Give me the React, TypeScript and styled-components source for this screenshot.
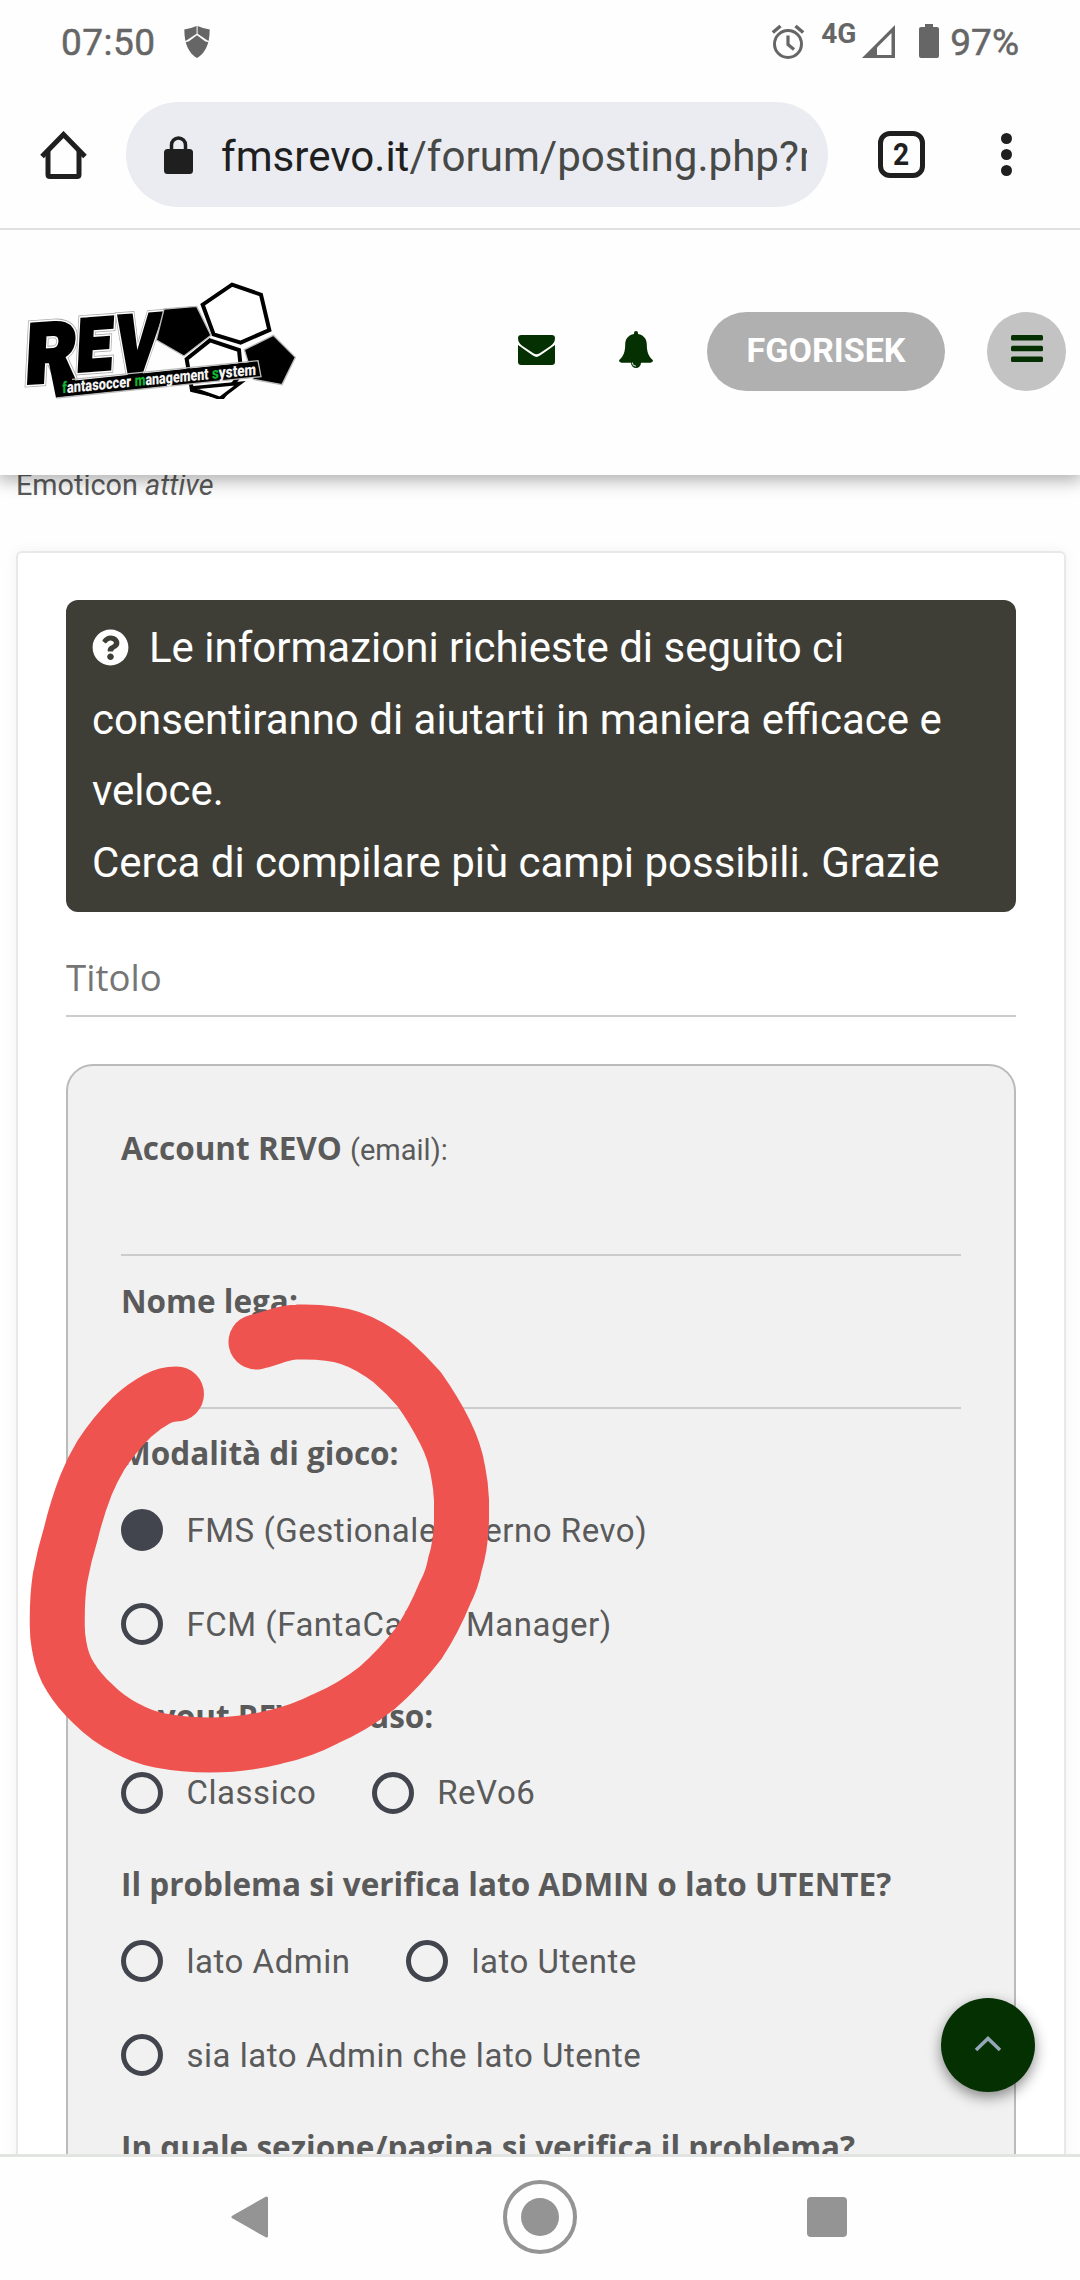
import React from "react";
import styled, { createGlobalStyle } from "styled-components";
import { FaQuestionCircle } from "react-icons/fa";

const GlobalStyle = createGlobalStyle`
  *, *::before, *::after { box-sizing: border-box; }
  body { margin: 0; background: #fff; }
`;

const roboto = `Roboto, "Noto Sans", sans-serif`;
const openSans = `"Open Sans", "Noto Sans", sans-serif`;
const green = "#053002";

const Screen = styled.div`
  position: relative;
  display: flex;
  flex-direction: column;
  width: 1080px;
  height: 2280px;
  overflow: hidden;
  background: #fefefe;
  color: #5a5a5a;
  font-family: ${roboto};
`;

/* ---------- Android status bar ---------- */
const StatusBar = styled.div`
  display: flex;
  align-items: center;
  justify-content: space-between;
  height: 84px;
  padding: 0 61px 0 61px;
  color: #666;
  font-size: 37px;
`;
const StatusGroup = styled.div`
  display: flex;
  align-items: center;
`;
const Clock = styled.span`
  margin-right: 28px;
  letter-spacing: 0.5px;
  -webkit-text-stroke: 0.5px #666;
`;
const Network = styled.span`
  margin: -17px 6px 0 16px;
  font-size: 28px;
  font-weight: 700;
`;
const Percent = styled.span`
  margin-left: 11px;
  -webkit-text-stroke: 0.5px #666;
`;
const BatteryIcon = styled.svg`
  margin: -3px 0 0 24px;
`;

/* ---------- Browser toolbar ---------- */
const Toolbar = styled.div`
  position: relative;
  z-index: 2;
  display: flex;
  align-items: center;
  height: 146px;
  padding: 0 67px 3px 40px;
  border-bottom: 2px solid #e0e0e0;
  background: #fefefe;
`;
const AddressBar = styled.div`
  display: flex;
  align-items: center;
  width: 702px;
  height: 105px;
  margin-left: 39px;
  padding: 0 21px 0 38px;
  border-radius: 53px;
  background: #ebecf1;
`;
const Url = styled.div`
  flex: 1;
  margin: 4px 0 0 28px;
  overflow: hidden;
  white-space: nowrap;
  font-size: 42.1px;
  line-height: 60px;
  color: #474947;
  b { font-weight: 400; color: #1f1f1f; }
`;
const TabCount = styled.div`
  display: flex;
  align-items: center;
  justify-content: center;
  width: 47px;
  height: 47px;
  margin-left: 50px;
  border: 5px solid #1f1f1f;
  border-radius: 12px;
  color: #1f1f1f;
  font-size: 32px;
  font-weight: 700;
  line-height: 37px;
  span { transform: scaleX(0.88); }
`;
const Kebab = styled.div`
  display: flex;
  flex-direction: column;
  gap: 5px;
  margin-left: 76px;
  i { width: 11px; height: 11px; border-radius: 50%; background: #1f1f1f; }
`;

/* ---------- Site header ---------- */
const SiteHeader = styled.header`
  position: relative;
  z-index: 1;
  display: flex;
  align-items: center;
  flex: none;
  height: 245px;
  padding: 0 14px 2px 24px;
  background: #fefefe;
  box-shadow: 0 4px 16px 2px rgba(0, 0, 0, 0.3);
`;
const LogoSvg = styled.svg`
  align-self: flex-start;
  margin-top: 50px;
`;
const HeaderActions = styled.div`
  display: flex;
  align-items: center;
  margin-left: auto;
  color: ${green};
`;
const EnvelopeIcon = styled.svg`
  margin-top: -3px;
`;
const BellIcon = styled.svg`
  margin: -5px 0 0 64px;
`;
const UserButton = styled.button`
  width: 238px;
  height: 79px;
  margin: 0 42px 0 54px;
  padding: 0 0 3px;
  border: 0;
  border-radius: 40px;
  background: #b0b0b0;
  color: #fff;
  font: 700 34.1px ${roboto};
`;
const MenuButton = styled.button`
  display: flex;
  align-items: center;
  justify-content: center;
  width: 79px;
  height: 79px;
  padding: 0 0 6px;
  border: 0;
  border-radius: 50%;
  background: #c3c3c3;
`;

/* ---------- Page body ---------- */
const Main = styled.main`
  flex: none;
  height: 1679px;
  overflow: hidden;
`;
const EmoticonLine = styled.p`
  margin: -10px 0 46px 16px;
  font-size: 28.8px;
  line-height: 40px;
`;
const Card = styled.section`
  height: 1700px;
  margin: 0 14px 0 16px;
  padding: 47px 48px 0;
  border: 2px solid #e8e8e8;
  border-radius: 6px;
  background: #fff;
  box-shadow: 0 0 14px rgba(0, 0, 0, 0.05);
`;
const Notice = styled.div`
  height: 312px;
  padding: 12px 26px;
  border-radius: 12px;
  background: #3e3e36;
  color: #fff;
  font-size: 42px;
  line-height: 71.5px;
  white-space: nowrap;
  svg { width: 37px; height: 37px; margin-right: 20px; vertical-align: -4px; }
`;
const TitleField = styled.div`
  margin: 40px 0 47px;
  padding-bottom: 13px;
  border-bottom: 2px solid #ccc;
  color: #757575;
  font: 36.6px/50px ${openSans};
`;
const Questions = styled.div`
  height: 1200px;
  padding: 54px 53px 0;
  border: 2px solid #bbb;
  border-radius: 27px;
  background: #f1f1f1;
`;
const Group = styled.div`
  & + & { margin-top: 16.6px; }
`;
const Label = styled.div`
  color: #5a5a5a;
  font: 700 31.5px/55.5px ${openSans};
  white-space: nowrap;
`;
const Hint = styled.span`
  font: 400 29px/1 ${roboto};
`;
const TextLine = styled.div`
  height: 80.5px;
  border-bottom: 2px solid #ccc;
`;
const Options = styled.div`
  padding-top: 2.5px;
`;
const OptionRow = styled.div`
  display: flex;
  gap: 55.3px;
  height: 94px;
`;
const Option = styled.label`
  display: flex;
  align-items: center;
  gap: 23.5px;
  font-size: 33px;
  letter-spacing: 0.53px;
  white-space: nowrap;
`;
const RadioMark = styled.span<{ $on?: boolean }>`
  width: 42px;
  height: 42px;
  border: 5px solid #42454d;
  border-radius: 50%;
  background: ${(p) => (p.$on ? "#42454d" : "transparent")};
`;

/* ---------- Overlays ---------- */
const Scribble = styled.svg`
  position: absolute;
  left: 0;
  top: 1280px;
  z-index: 2;
`;
const ToTop = styled.button`
  position: absolute;
  left: 941px;
  top: 1998px;
  z-index: 2;
  display: flex;
  align-items: center;
  justify-content: center;
  width: 94px;
  height: 94px;
  padding: 0;
  border: 0;
  border-radius: 50%;
  background: ${green};
  box-shadow: 0 5px 14px rgba(0, 0, 0, 0.45);
`;

/* ---------- Android navigation ---------- */
const NavBar = styled.nav`
  position: relative;
  flex: 1;
  display: flex;
  align-items: center;
  justify-content: space-between;
  padding: 0 233px 3px 231px;
  border-top: 3px solid #e2e4e1;
  background: #fefefe;
`;
const HomeRing = styled.span`
  display: flex;
  align-items: center;
  justify-content: center;
  width: 74px;
  height: 74px;
  margin-left: 4px;
  border: 4px solid #949494;
  border-radius: 50%;
  i { width: 38px; height: 38px; border-radius: 50%; background: #949494; }
`;
const RecentSquare = styled.span`
  width: 40px;
  height: 40px;
  border-radius: 4px;
  background: #949494;
`;

const Logo = () => {
  const letters = (
    <>
      <text transform="translate(74 370) rotate(-4) skewX(-7)" textLength="152" lengthAdjust="spacingAndGlyphs">R</text>
      <text transform="translate(228 333) rotate(-4) skewX(-7)" fontSize="215" textLength="104" lengthAdjust="spacingAndGlyphs">E</text>
      <text transform="translate(342 345) rotate(-4) skewX(-9)" textLength="128" lengthAdjust="spacingAndGlyphs">V</text>
    </>
  );
  return (
    <LogoSvg width="276" height="119" viewBox="72 60 828 357">
      <g fontFamily="Roboto, sans-serif" fontWeight="900" fontSize="245" strokeLinejoin="miter">
        <g fill="#aaa" stroke="#aaa" strokeWidth="26">{letters}</g>
        <g fill="#fff" stroke="#fff" strokeWidth="21">{letters}</g>
        <g fill="#000" stroke="#000" strokeWidth="12">{letters}</g>
      </g>
      <polygon points="492,147 590,139 633,226 552,288 469,240" fill="#000" stroke="#bbb" strokeWidth="4" />
      <polygon points="497,152 584,144 618,222 550,280 475,238" fill="#000" />
      <polygon points="630,241 717,270 724,340 668,412 576,390 560,297" fill="#fff" stroke="#000" strokeWidth="12" />
      <polygon points="696,74 783,104 808,210 722,248 641,223 608,134" fill="#fff" stroke="#000" strokeWidth="12" />
      <polygon points="820,226 886,292 846,374 760,358 733,269" fill="#000" stroke="#bbb" strokeWidth="4" />
      <polygon points="573,384 660,415 720,370" fill="#fff" stroke="#000" strokeWidth="10" />
      <polygon points="146,305 200,301 218,362 774,304 782,350 168,413" fill="#000" />
      <path d="M216 358L774 302L783 350L170 414" fill="none" stroke="#bbb" strokeWidth="4" />
      <g fontFamily="Roboto, sans-serif" fontWeight="900" fontSize="48" fill="#f4f4f4">
        <text transform="translate(187 400) rotate(-5.4) skewX(-5)" textLength="207" lengthAdjust="spacingAndGlyphs">
          <tspan fill="#12b52c">f</tspan>antasoccer
        </text>
        <text transform="translate(404 379) rotate(-5.4) skewX(-5)" textLength="223" lengthAdjust="spacingAndGlyphs">
          <tspan fill="#12b52c">m</tspan>anagement
        </text>
        <text transform="translate(636 357) rotate(-5.4) skewX(-5)" textLength="133" lengthAdjust="spacingAndGlyphs">
          <tspan fill="#12b52c">s</tspan>ystem
        </text>
      </g>
    </LogoSvg>
  );
};

const Radio = ({ text, on }: { text: string; on?: boolean }) => (
  <Option>
    <RadioMark $on={on} />
    {text}
  </Option>
);

export default function App() {
  return (
    <Screen>
      <GlobalStyle />
      <StatusBar>
        <StatusGroup>
          <Clock>07:50</Clock>
          <svg width="26" height="32" viewBox="0 0 26 32" fill="#666">
            <path d="M12.6 0v7.700L2 14.800H1.300Q.3 9 .3 3.400Q7 2.500 12.600 0zM13.600 0v7.700L24 14.800H24.700Q25.700 9 25.700 3.400Q19 2.500 13.600 0z" />
            <path d="M13 9.300l8 6l3.300.9C22 23.500 18.500 29 13 32C7.500 29 4 23.500 1.700 16.200l3.300-.9z" />
          </svg>
        </StatusGroup>
        <StatusGroup>
          <svg width="34" height="36" viewBox="0 0 34 36" fill="none" stroke="#666">
            <circle cx="17" cy="20" r="13.5" strokeWidth="3" />
            <path d="M17 11.500v9l6 5" strokeWidth="3.200" />
            <path d="M1.800 8.500l7.700-6.500M32.200 8.500l-7.700-6.500" strokeWidth="3.500" />
          </svg>
          <Network>4G</Network>
          <svg width="33" height="34" viewBox="0 0 33 34">
            <path d="M0 33L33 0V33z" fill="#666" />
            <path d="M15 22.500L29.500 8V30H15z" fill="#fefefe" />
          </svg>
          <BatteryIcon width="20" height="34" viewBox="0 0 20 34" fill="#666">
            <path d="M6 0h8v3h4a2 2 0 0 1 2 2v27a2 2 0 0 1-2 2H2a2 2 0 0 1-2-2V5a2 2 0 0 1 2-2h4z" />
          </BatteryIcon>
          <Percent>97%</Percent>
        </StatusGroup>
      </StatusBar>

      <Toolbar>
        <svg width="47" height="48" viewBox="0 0 47 48" fill="none" stroke="#1f1f1f" strokeWidth="5">
          <path d="M2 25.500L23.500 3.500L45 25.500" />
          <path d="M8 20V43.500q0 2 2 2H37q2 0 2-2V20" />
        </svg>
        <AddressBar>
          <svg width="29" height="38" viewBox="0 0 29 38">
            <path d="M7.500 15V9a7 7 0 0 1 14 0v6" fill="none" stroke="#1f1f1f" strokeWidth="3.500" />
            <rect y="13" width="29" height="25" rx="3.500" fill="#1f1f1f" />
          </svg>
          <Url>
            <b>fmsrevo.it</b>/forum/posting.php?m
          </Url>
        </AddressBar>
        <TabCount>
          <span>2</span>
        </TabCount>
        <Kebab>
          <i />
          <i />
          <i />
        </Kebab>
      </Toolbar>

      <SiteHeader>
        <Logo />
        <HeaderActions>
          <EnvelopeIcon width="37" height="30" viewBox="0 0 37 30" fill={green}>
            <path d="M3.300 0H33.700A3.300 3.300 0 0 1 37 3.300C37 7 35 9.300 32.500 11L22 18Q20 19.300 18.500 19.300Q17 19.300 15 18L4.500 11C2 9.300 0 7 0 3.300A3.300 3.300 0 0 1 3.300 0z" />
            <path d="M0 9.800Q1 11 15 20.600Q17 22 18.500 22Q20 22 22 20.600Q36 11 37 9.800V26.700A3.300 3.300 0 0 1 33.700 30H3.300A3.300 3.300 0 0 1 0 26.700z" />
          </EnvelopeIcon>
          <BellIcon width="34" height="37" viewBox="0 0 34 37">
            <path
              d="M15 2a2 2 0 0 1 4 0v1C25 4.200 27.800 8 27.800 13.500C27.800 21 29.500 25.500 34 29.300Q34 31.700 31.500 31.700H22a5 5.200 0 0 1-10 0H2.500Q0 31.700 0 29.300C4.500 25.500 6.200 21 6.200 13.500C6.200 8 9 4.200 15 3z"
              fill={green}
            />
            <path d="M13.300 31.500a3.700 3.700 0 0 0 3.700 3.700" fill="none" stroke="#fefefe" strokeWidth="0.9" />
          </BellIcon>
          <UserButton>FGORISEK</UserButton>
          <MenuButton>
            <svg width="32" height="27" viewBox="0 0 32 27" fill={green}>
              <rect width="32" height="5.600" rx="1.500" />
              <rect y="10.700" width="32" height="5.600" rx="1.500" />
              <rect y="21.400" width="32" height="5.600" rx="1.500" />
            </svg>
          </MenuButton>
        </HeaderActions>
      </SiteHeader>

      <Main>
        <EmoticonLine>
          Emoticon <em>attive</em>
        </EmoticonLine>
        <Card>
          <Notice>
            <FaQuestionCircle />
            Le informazioni richieste di seguito ci
            <br />
            consentiranno di aiutarti in maniera efficace e
            <br />
            veloce.
            <br />
            Cerca di compilare più campi possibili. Grazie
          </Notice>
          <TitleField>Titolo</TitleField>
          <Questions>
            <Group>
              <Label>
                Account REVO <Hint>(email):</Hint>
              </Label>
              <TextLine />
            </Group>
            <Group>
              <Label>Nome lega:</Label>
              <TextLine />
            </Group>
            <Group>
              <Label>Modalità di gioco:</Label>
              <Options>
                <OptionRow>
                  <Radio text="FMS (Gestionale interno Revo)" on />
                </OptionRow>
                <OptionRow>
                  <Radio text="FCM (FantaCalcio Manager)" />
                </OptionRow>
              </Options>
            </Group>
            <Group>
              <Label>Layout REVO in uso:</Label>
              <Options>
                <OptionRow>
                  <Radio text="Classico" />
                  <Radio text="ReVo6" />
                </OptionRow>
              </Options>
            </Group>
            <Group>
              <Label>Il problema si verifica lato ADMIN o lato UTENTE?</Label>
              <Options>
                <OptionRow>
                  <Radio text="lato Admin" />
                  <Radio text="lato Utente" />
                </OptionRow>
                <OptionRow>
                  <Radio text="sia lato Admin che lato Utente" />
                </OptionRow>
              </Options>
            </Group>
            <Group>
              <Label>In quale sezione/pagina si verifica il problema?</Label>
            </Group>
          </Questions>
        </Card>
      </Main>

      <Scribble width="520" height="520" viewBox="0 1280 520 520" fill="none">
        <path
          d="M256 1342C270 1339 283 1332 297 1332C315 1331.500 333 1332 350 1338C365 1343 378 1351 391 1361Q406 1374 419 1389Q434 1410 445 1432Q455 1452 458 1471Q461 1486 461.500 1500V1520Q461 1545 455 1564Q452 1580 445 1593Q434 1620 419 1643Q399 1669 377 1688Q353 1707 325 1719Q302 1731 275 1737Q243 1745 210 1745Q184 1745 160 1740.500Q142 1737 126 1728Q108 1719 93 1704Q79 1691 70.500 1677Q62 1664 59 1645Q57 1634 57.300 1622Q57 1598 60 1578Q64 1556 71 1533Q77 1508 86 1485Q92 1470 101 1455Q114 1435 132 1417Q144 1406 157 1399Q166 1394 176.500 1394"
          stroke="#ef534f"
          strokeWidth="55"
          strokeLinecap="round"
          strokeLinejoin="round"
        />
      </Scribble>
      <ToTop>
        <svg width="28" height="18" viewBox="0 0 28 18" fill="none">
          <path d="M2 14L14 2.500L26 14" stroke="#96a7b8" strokeWidth="3.500" />
        </svg>
      </ToTop>

      <NavBar>
        <svg width="38" height="42" viewBox="0 0 38 42">
          <path d="M35.500 2V40L2 21z" fill="#949494" stroke="#949494" strokeWidth="3" strokeLinejoin="round" />
        </svg>
        <HomeRing>
          <i />
        </HomeRing>
        <RecentSquare />
      </NavBar>
    </Screen>
  );
}
